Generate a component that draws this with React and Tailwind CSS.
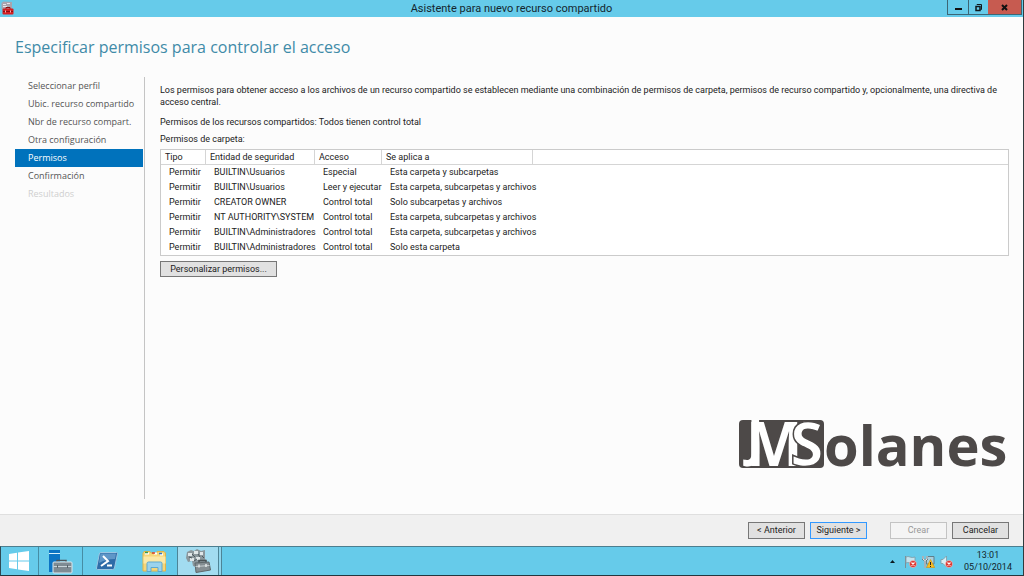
const steps = [
  { label: 'Seleccionar perfil', state: 'done' },
  { label: 'Ubic. recurso compartido', state: 'done' },
  { label: 'Nbr de recurso compart.', state: 'done' },
  { label: 'Otra configuración', state: 'done' },
  { label: 'Permisos', state: 'current' },
  { label: 'Confirmación', state: 'done' },
  { label: 'Resultados', state: 'disabled' },
];

const stepStyle = {
  done: 'text-[#555]',
  current: 'bg-[#0072bc] text-white',
  disabled: 'text-[#cfcfcf]',
};

const rows = [
  ['Permitir', 'BUILTIN\\Usuarios', 'Especial', 'Esta carpeta y subcarpetas'],
  ['Permitir', 'BUILTIN\\Usuarios', 'Leer y ejecutar', 'Esta carpeta, subcarpetas y archivos'],
  ['Permitir', 'CREATOR OWNER', 'Control total', 'Solo subcarpetas y archivos'],
  ['Permitir', 'NT AUTHORITY\\SYSTEM', 'Control total', 'Esta carpeta, subcarpetas y archivos'],
  ['Permitir', 'BUILTIN\\Administradores', 'Control total', 'Esta carpeta, subcarpetas y archivos'],
  ['Permitir', 'BUILTIN\\Administradores', 'Control total', 'Solo esta carpeta'],
];

function WizardIcon() {
  return (
    <svg viewBox="0 0 13 14" className="h-[14px] w-[13px]" aria-hidden="true">
      <path d="M0.500 2l2-1.500 8.500 .5v7H0.500z" fill="#a9a4ae" />
      <path d="M2 3.500h3M6 2.500h3M2 5.500h4" stroke="#e8e4ea" />
      <path d="M5 8V6.500h4V8" fill="none" stroke="#8a1010" />
      <rect x="1.500" y="7.500" width="11" height="6" rx="1" fill="#d31f22" />
      <path d="M2 10.500h10" stroke="#8d0c10" />
      <path d="M4.500 9.500v2M9.500 9.500v2" stroke="#f3b5b5" />
    </svg>
  );
}

function TitleBar() {
  return (
    <header className="flex h-[17px] shrink-0 items-start bg-[#66cbea]">
      <div className="flex-1 pl-px pt-px">
        <WizardIcon />
      </div>
      <h1 className="text-[11px] leading-[17px] text-[#14262e]">Asistente para nuevo recurso compartido</h1>
      <div className="flex flex-1 justify-end pr-px">
        <div className="flex h-[15px] border-x border-b border-[#3d6675]">
          <button type="button" aria-label="Minimizar" className="flex w-[21px] items-center justify-center border-r border-[#3d6675]">
            <svg viewBox="0 0 9 9" className="h-[9px] w-[9px]"><path d="M1 5h7v2H1z" fill="#111" /></svg>
          </button>
          <button type="button" aria-label="Restaurar" className="flex w-[19px] items-center justify-center">
            <svg viewBox="0 0 9 9" className="h-[9px] w-[9px]" fill="none" stroke="#10191d">
              <path d="M3 2V1.500h4.500v5H6.500" />
              <rect x="2" y="3.500" width="4" height="4" strokeWidth="1.500" />
            </svg>
          </button>
          <button type="button" aria-label="Cerrar" className="flex w-[33px] items-center justify-center bg-[#c75b50]">
            <svg viewBox="0 0 9 9" className="h-[9px] w-[9px]"><path d="M2 2l5 5M7 2L2 7" stroke="#111" strokeWidth="2" /></svg>
          </button>
        </div>
      </div>
    </header>
  );
}

function Steps() {
  return (
    <nav aria-label="Pasos" className="w-[130px] shrink-0 border-r border-[#c4c4c4] pr-px font-['Open_Sans',sans-serif]">
      <ol>
        {steps.map((s) => (
          <li key={s.label} className={`h-[18px] whitespace-nowrap pl-[13px] leading-[18px] ${stepStyle[s.state]}`} aria-current={s.state === 'current' ? 'step' : undefined}>
            {s.label}
          </li>
        ))}
      </ol>
    </nav>
  );
}

function PermissionsTable() {
  return (
    <div className="border border-[#cbcbcb] bg-white">
      <table className="w-full table-fixed border-separate border-spacing-0 text-left">
        <colgroup>
          <col className="w-[45px]" />
          <col className="w-[109px]" />
          <col className="w-[67px]" />
          <col className="w-[151px]" />
          <col />
        </colgroup>
        <thead>
          <tr>
            {['Tipo', 'Entidad de seguridad', 'Acceso', 'Se aplica a'].map((h) => (
              <th key={h} scope="col" className="h-[15px] whitespace-nowrap border-b border-r border-[#d5d5d5] p-0 pl-1 font-normal leading-[14px]">{h}</th>
            ))}
            <td className="border-b border-[#d5d5d5] p-0" />
          </tr>
        </thead>
        <tbody>
          {rows.map((r, i) => (
            <tr key={i}>
              {r.map((c, j) => (
                <td key={j} className="h-[15px] whitespace-nowrap p-0 pl-2 leading-[15px]">{c}</td>
              ))}
              <td className="p-0" />
            </tr>
          ))}
        </tbody>
      </table>
    </div>
  );
}

function Logo() {
  return (
    <svg viewBox="0 0 270 52" className="h-[52px] w-[270px]" role="img" aria-label="JMSolanes" fontFamily="'Open Sans', sans-serif" fontWeight="700">
      <rect x="0" y="1" width="85" height="48" rx="4" fill="#4d4948" />
      <text x="8" y="37" fontSize="50" fill="#fff">J</text>
      <text x="7" y="47" fontSize="60" fill="#fff">M</text>
      <text x="51" y="47" fontSize="61" fill="#fff" stroke="#4d4948" strokeWidth="1.500">S</text>
      <text x="85" y="47" fontSize="56" fill="#4d4948">olanes</text>
    </svg>
  );
}

const btn = 'h-[17px] w-[57px] border text-center leading-[15px]';

function Footer() {
  return (
    <footer className="flex h-[32px] shrink-0 items-center justify-end border-t border-[#dfdfdf] bg-[#f0f0f0] pr-[14px]">
      <button type="button" className={`${btn} border-[#777] bg-[#e1e1e1]`}>&lt; Anterior</button>
      <button type="button" className={`${btn} ml-[5px] border-[#3399ff] bg-[#e1e1e1]`}>Siguiente &gt;</button>
      <button type="button" disabled className={`${btn} ml-[23px] border-[#c3c3c3] bg-[#f4f4f4] text-[#989898]`}>Crear</button>
      <button type="button" className={`${btn} ml-[5px] border-[#777] bg-[#e1e1e1]`}>Cancelar</button>
    </footer>
  );
}

function StartIcon() {
  return (
    <svg viewBox="0 0 20 20" className="h-[20px] w-[20px]" fill="#fff" aria-hidden="true">
      <path d="M0 3l8-1.200v7.700H0zM9 1.600L20 0v9.500H9zM0 10.500h8v7.700L0 17zM9 10.500h11V20L9 18.400z" />
    </svg>
  );
}

function ServerManagerIcon() {
  return (
    <svg viewBox="0 0 25 25" className="h-[25px] w-[25px]" aria-hidden="true">
      <rect x="1" y="1" width="11" height="22" fill="#0b74c4" />
      <path d="M1 4.500h11" stroke="#d8f0fa" />
      <path d="M9 14V11.500h9V14" fill="none" stroke="#4c565c" strokeWidth="1.500" />
      <rect x="5" y="13" width="19" height="11" rx="1" fill="#7e8b93" stroke="#dceaf0" />
      <path d="M5.500 17.500h18" stroke="#c9d4d9" />
      <path d="M9.500 16v3M19.500 16v3" stroke="#59646a" />
    </svg>
  );
}

function PowerShellIcon() {
  return (
    <svg viewBox="0 0 22 18" className="h-[18px] w-[22px]" aria-hidden="true">
      <path d="M5 .5h15.500q1.200 0 1 1.200L18.500 16q-.3 1.500-1.800 1.500H1.500Q.3 17.500.5 16L3.300 2Q3.600.5 5 .5z" fill="#2e6ca8" stroke="#9cc6e2" />
      <path d="M4.500 1.500H20L19 7Q10 7 3 11z" fill="#5f97c8" />
      <path d="M7 4l5 5-7 5" fill="none" stroke="#fff" strokeWidth="2" />
      <path d="M11 13.500h5" stroke="#fff" strokeWidth="2" />
    </svg>
  );
}

function ExplorerIcon() {
  return (
    <svg viewBox="0 0 25 22" className="h-[22px] w-[25px]" aria-hidden="true">
      <path d="M1 3l1-1.500h6L9 3h6V1.500h7L23.500 3v18H1z" fill="#f5d67b" stroke="#e0b548" />
      <path d="M3 3.500h4M12 3.500h3M18 4.500h3" stroke="#fff" strokeWidth="2" />
      <path d="M3 2.500h3" stroke="#3c9a4a" strokeWidth="1.500" />
      <path d="M10 3h3" stroke="#d8422e" strokeWidth="1.500" />
      <path d="M17 3.500h3" stroke="#2f74c0" strokeWidth="1.500" />
      <path d="M1.500 6.500h22v7h-22z" fill="#fbe8a6" />
      <path d="M5 21.500v-8q0-1.500 1.500-1.500h12q1.500 0 1.500 1.500v8h-4v-4H9v4z" fill="#9bd3ee" stroke="#5ea9cf" />
    </svg>
  );
}

function ToolboxIcon() {
  return (
    <svg viewBox="0 0 25 24" className="h-[24px] w-[25px]" aria-hidden="true">
      <path d="M1 3l4-2 3 1 3-2 4 2 4-1v9l2 2-6 8-8-3-1-5-4 1-2-4z" fill="#8b979c" />
      <path d="M2 4h4v3H2zM8 2h4v3H8zM14 3h3v3h-3zM4 9h4v3H4zM10 8h4v3h-4z" fill="#dfe6e8" />
      <path d="M6 5l3 3M12 5l2 3M8 12l3-2M3 8l3 1M16 7l2 2" stroke="#4d585d" />
      <path d="M13 14v-2.500h7V14" fill="none" stroke="#4b5356" strokeWidth="1.500" />
      <path d="M9 14l14-1 1.500 8L10 23.500z" fill="#858e92" stroke="#5e676a" />
      <path d="M9.500 17.500l14-1" stroke="#c8cfd1" />
      <path d="M13 15.500v3M20 15v3" stroke="#e3e7e8" strokeWidth="1.500" />
    </svg>
  );
}

function ErrorBadge() {
  return (
    <g>
      <circle cx="9" cy="9" r="3.500" fill="#dc2a24" stroke="#f6d5d3" strokeWidth=".6" />
      <path d="M7.500 7.500l3 3M10.500 7.500l-3 3" stroke="#fff" strokeWidth="1.200" />
    </g>
  );
}

const trayIcon = 'h-[13px] w-[13px]';

function Tray() {
  return (
    <div className="flex items-center">
      <button type="button" aria-label="Mostrar iconos ocultos" className="mr-[9px]">
        <svg viewBox="0 0 5 3" className="h-[3px] w-[5px]"><path d="M0 3L2.500 0 5 3z" fill="#0c1a20" /></svg>
      </button>
      <button type="button" aria-label="Centro de actividades" className="mr-[5px]">
        <svg viewBox="0 0 13 13" className={trayIcon}>
          <path d="M1.500 1v12" stroke="#7d8f97" />
          <path d="M2 2q2-1 4 0t5 0v6q-2.500 1-5 0T2 8z" fill="#c4e3ee" stroke="#7f9aa5" strokeWidth=".8" />
          <ErrorBadge />
        </svg>
      </button>
      <button type="button" aria-label="Red" className="mr-[5px]">
        <svg viewBox="0 0 13 13" className={trayIcon}>
          <path d="M4.500 1.500h7.500v7.500H4.500z" fill="#a8cfdc" stroke="#5f7f8b" />
          <path d="M1 1v3l2 1.500V13M5 1v3L3 5.500" fill="none" stroke="#5b6d75" strokeWidth="2" />
          <path d="M1 1v3l2 1.500V13M5 1v3L3 5.500" fill="none" stroke="#f4f8fa" />
          <path d="M8.500 4.500l4.200 8H4.500z" fill="#f7bd22" stroke="#d18e06" strokeWidth=".6" />
          <path d="M8.500 7v3M8.500 11v1" stroke="#222" />
        </svg>
      </button>
      <button type="button" aria-label="Volumen" className="mr-[11px]">
        <svg viewBox="0 0 13 13" className={trayIcon}>
          <path d="M1 4.500h2L6.500 1v11L3 8.500H1z" fill="#d9eef5" stroke="#7f9aa5" strokeWidth=".8" />
          <ErrorBadge />
        </svg>
      </button>
      <time className="mr-[11px] w-[48px] whitespace-nowrap text-center leading-[12px] text-[#12242b]">
        13:01<br />05/10/2014
      </time>
    </div>
  );
}

const task = 'flex items-center justify-center';

function Taskbar() {
  return (
    <footer className="flex h-[30px] shrink-0 border-y border-l border-b-[#24363d] border-l-[#2f4a54] border-t-[#4c7e8f] bg-[#66cbea]">
      <button type="button" aria-label="Inicio" className={`${task} w-[38px] border-r border-[#468da4] pr-px`}><StartIcon /></button>
      <button type="button" aria-label="Administrador del servidor" className={`${task} w-[44px] border-r border-[#468da4]`}><ServerManagerIcon /></button>
      <button type="button" aria-label="PowerShell" className={`${task} w-[48px]`}><PowerShellIcon /></button>
      <button type="button" aria-label="Explorador de archivos" className={`${task} w-[46px]`}><ExplorerIcon /></button>
      <button type="button" aria-label="Asistente" className={`${task} w-[42px] border-x border-[#4d8496] bg-[#a2dcf0]`}><ToolboxIcon /></button>
      <span className="w-[3px] border-r border-[#4d8496] bg-[#8fd6ed]" />
      <div className="ml-auto flex"><Tray /></div>
    </footer>
  );
}

export default function App() {
  return (
    <div className="flex min-h-screen flex-col border-r border-[#303a3d] bg-[#fcfcfc] font-['Roboto',sans-serif] text-[9px] text-[#222]">
      <TitleBar />
      <main className="flex flex-1 flex-col pl-[15px] pr-[14px]">
        <h2 className="pt-[18px] font-['Open_Sans',sans-serif] text-[16px] leading-[24px] text-[#3f8ba8]">Especificar permisos para controlar el acceso</h2>
        <div className="mb-[15px] mt-[18px] flex flex-1">
          <Steps />
          <section className="flex min-w-0 flex-1 flex-col pl-[15px] pt-[7px]">
            <p className="leading-[12px]">
              Los permisos para obtener acceso a los archivos de un recurso compartido se establecen mediante una combinación de permisos de carpeta, permisos de recurso compartido y, opcionalmente, una directiva de acceso central.
            </p>
            <p className="mt-[8px] leading-[12px]">Permisos de los recursos compartidos: Todos tienen control total</p>
            <p className="mb-[4px] mt-[5px] leading-[12px]">Permisos de carpeta:</p>
            <PermissionsTable />
            <button type="button" className="mt-[5px] h-[16px] w-[117px] border border-[#777] bg-[#e1e1e1] leading-[14px]">Personalizar permisos...</button>
            <div className="mt-auto flex justify-end pb-[28px]">
              <Logo />
            </div>
          </section>
        </div>
      </main>
      <Footer />
      <Taskbar />
    </div>
  );
}
